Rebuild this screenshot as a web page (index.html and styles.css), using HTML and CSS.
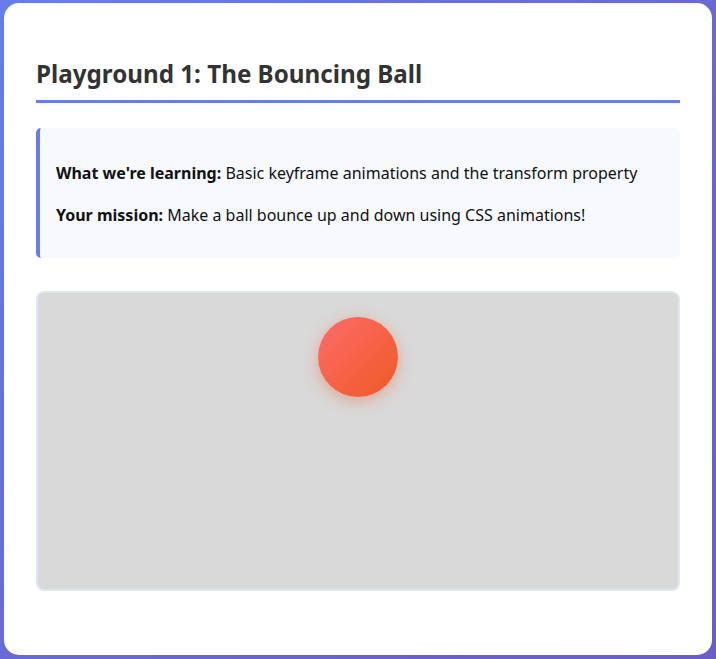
FILE: index.html
```html
<!DOCTYPE html>
<html lang="en">
<head>
<meta charset="utf-8">
<title>Playground 1: The Bouncing Ball</title>
<link rel="stylesheet" href="styles.css">
</head>
<body>
  <main class="card">
    <h2 class="title">Playground 1: The Bouncing Ball</h2>
    <section class="info">
      <p><strong>What we're learning:</strong> Basic keyframe animations and the transform property</p>
      <p><strong>Your mission:</strong> Make a ball bounce up and down using CSS animations!</p>
    </section>
    <div class="stage">
      <div class="ball"></div>
    </div>
  </main>
</body>
</html>
```
FILE: styles.css
```css
* { box-sizing: border-box; }
html, body { height: 100%; }
body {
  margin: 0;
  padding: 3px 4px 4px 4px;
  background: linear-gradient(135deg, #667eea 0%, #6a66d0 60%, #6a5ec4 100%);
  font-family: "Noto Sans", "Open Sans", sans-serif;
  color: #111;
  overflow: hidden;
}
.card {
  background: #fff;
  border-radius: 15px;
  height: 652px;
  padding: 32px;
}
.title {
  margin: 22px 0 25px;
  padding-bottom: 10px;
  border-bottom: 3px solid #667eea;
  font-size: 24.2px;
  line-height: 33px;
  font-weight: 700;
  color: #333;
}
.info {
  background: #f8f9ff;
  border-left: 4px solid #667eea;
  border-radius: 5px;
  padding: 16px 16px 14px;
  font-size: 16px;
  line-height: 26px;
}
.info p { margin: 16px 0; }
.info strong { font-weight: 700; }
.stage {
  margin-top: 33px;
  height: 300px;
  background: #d9d9d9;
  border: 2px solid #e2e6f0;
  border-radius: 8px;
  display: flex;
  justify-content: center;
  align-items: flex-start;
  padding-top: 24px;
}
.ball {
  width: 80px;
  height: 80px;
  border-radius: 50%;
  background: linear-gradient(135deg, #ff6b6b, #ee5a24);
  box-shadow: 0 4px 15px rgba(238, 90, 36, 0.4);
}
```
